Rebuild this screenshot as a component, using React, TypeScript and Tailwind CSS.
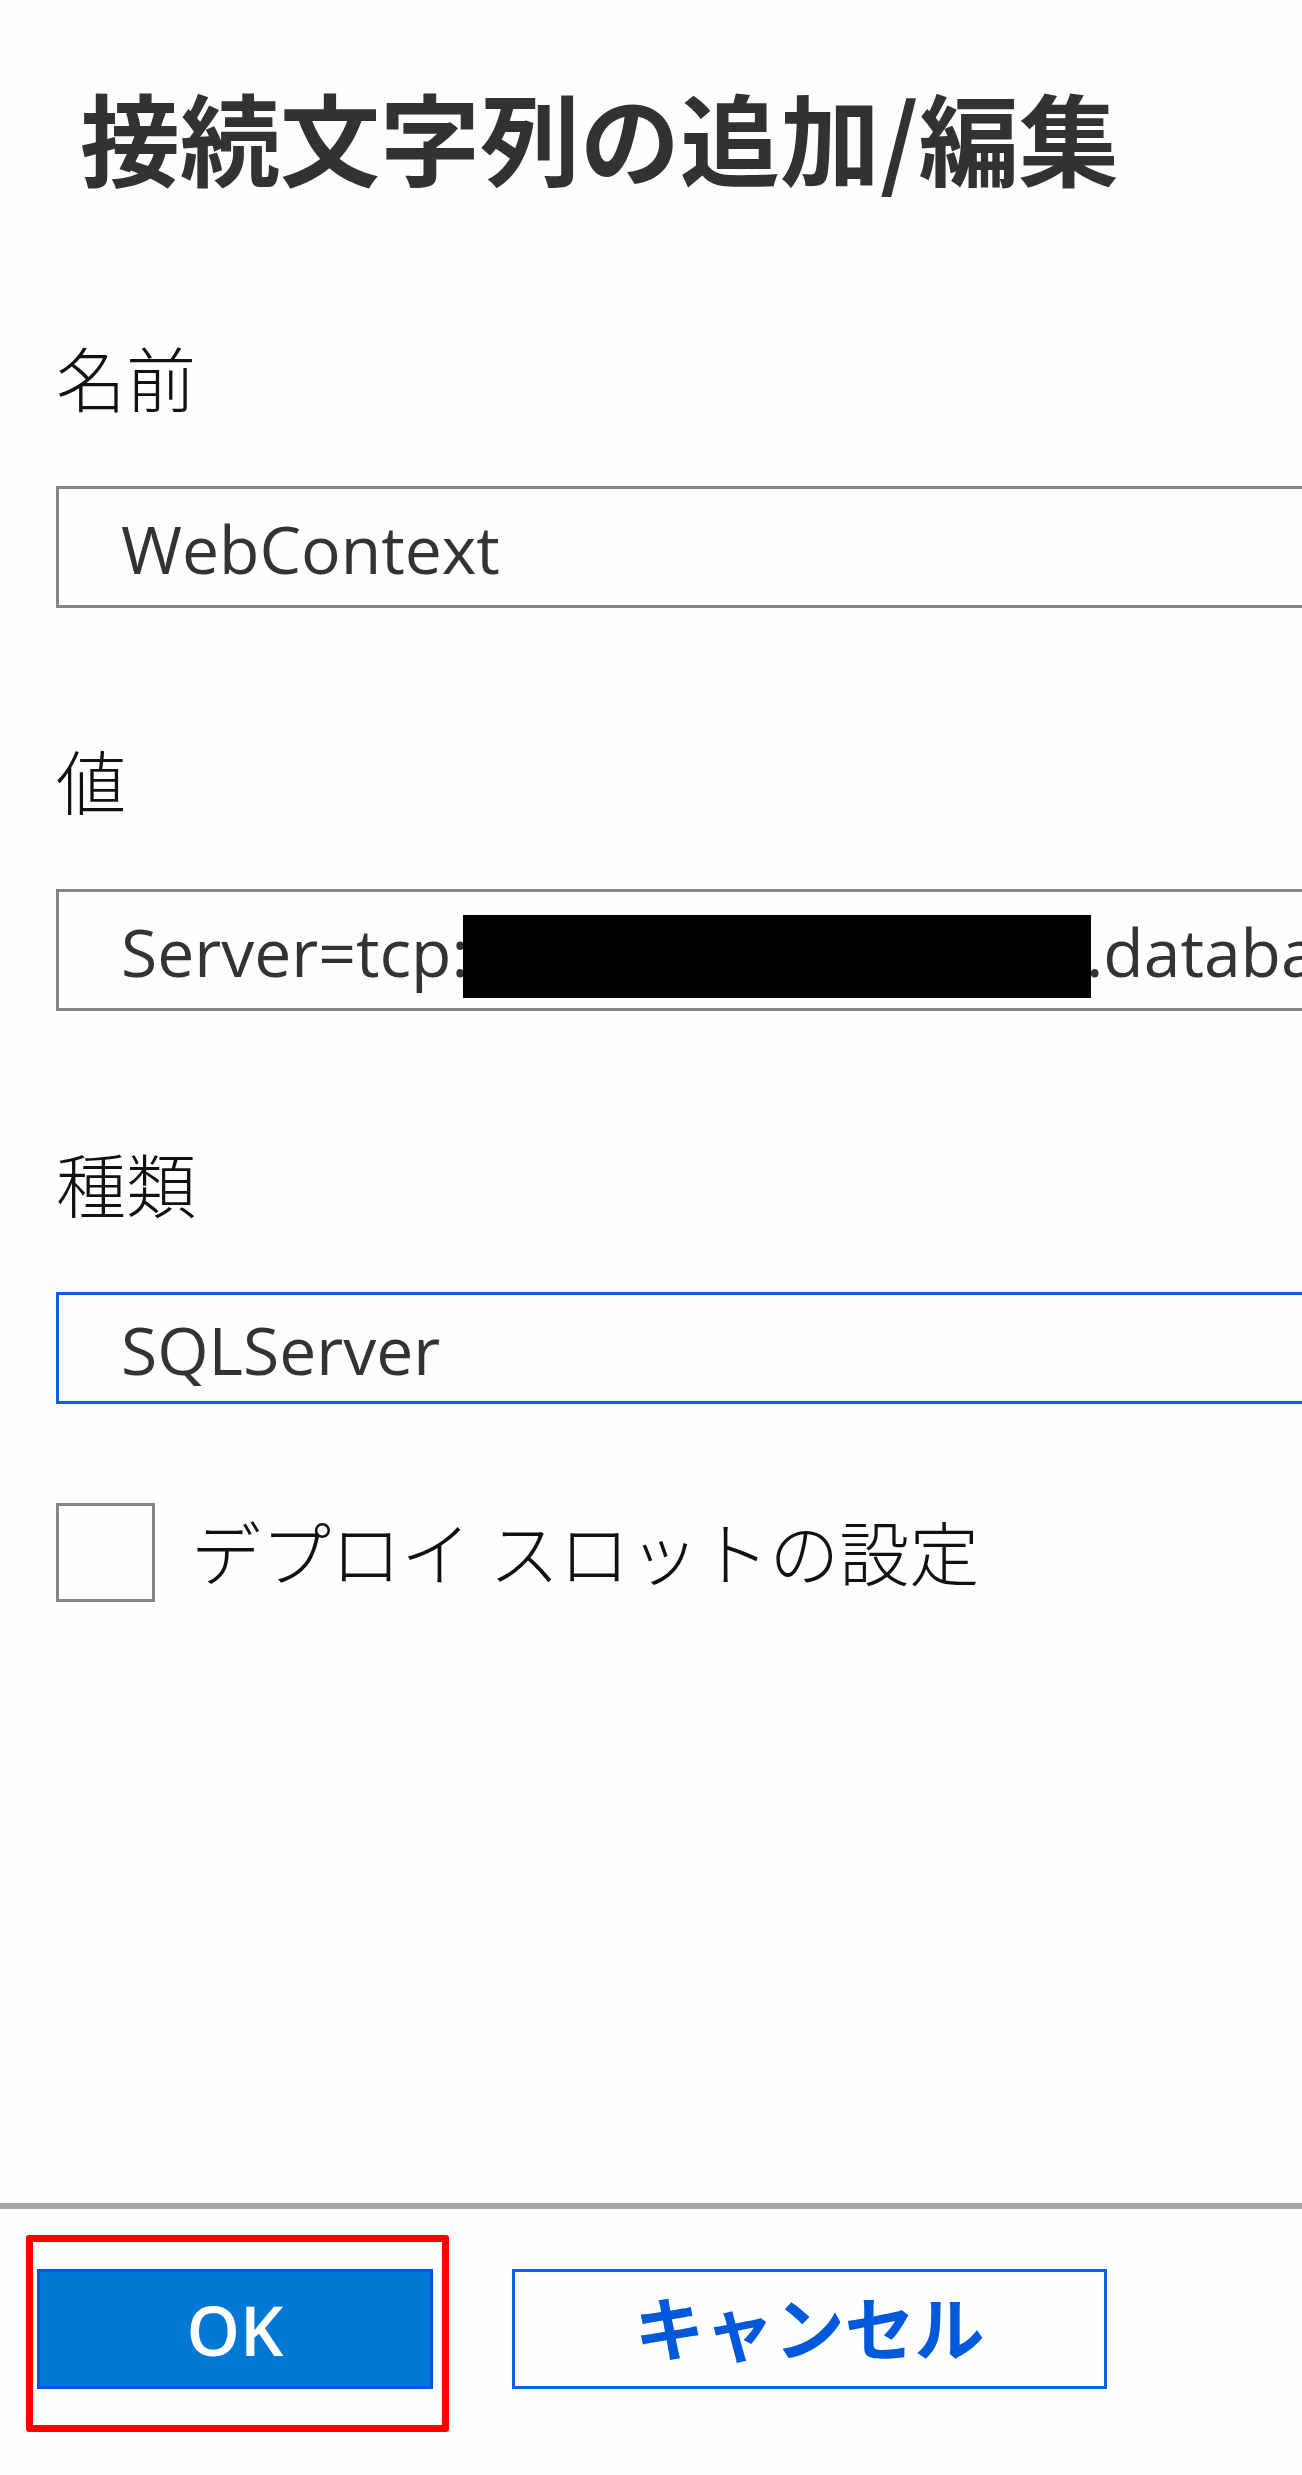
import { useState } from "react";
import type { ReactNode } from "react";

const control =
  "block w-full rounded-none border-[3px] border-r-0 bg-transparent pt-[2px] pl-[62px] text-[66px] font-normal text-[#333333] outline-none";

function Field({ id, label, children }: { id: string; label: string; children: ReactNode }) {
  return (
    <div className="flex flex-col gap-[70px]">
      <label htmlFor={id} className="text-[70px] leading-[72px] font-light">
        {label}
      </label>
      {children}
    </div>
  );
}

export default function App() {
  const [name, setName] = useState("WebContext");
  const [value, setValue] = useState(
    "Server=tcp:" + "\u00a0".repeat(36) + ".database.windows.net",
  );
  const [slot, setSlot] = useState(false);

  return (
    <div className="flex min-h-screen flex-col overflow-hidden bg-[#fefefe] font-['Open_Sans','Noto_Sans_CJK_JP',sans-serif] text-[#111111]">
      <h1 className="pt-[76px] pl-[80px] font-['Noto_Sans_CJK_JP',sans-serif] text-[100px] leading-[120px] font-bold text-[#323232]">
        接続文字列の追加/編集
      </h1>

      <form className="mt-[148px] flex flex-col gap-[139px] pl-[56px]">
        <Field id="name" label="名前">
          <input
            id="name"
            type="text"
            value={name}
            onChange={(e) => setName(e.target.value)}
            className={`${control} h-[122px] border-[#858585]`}
          />
        </Field>
        <Field id="value" label="値">
          <div className="relative">
            <input
              id="value"
              type="text"
              value={value}
              onChange={(e) => setValue(e.target.value)}
              className={`${control} h-[122px] border-[#858585]`}
            />
            <span className="absolute top-[26px] left-[407px] h-[83px] w-[628px] bg-black" />
          </div>
        </Field>
        <div className="flex flex-col gap-[99px]">
          <Field id="type" label="種類">
            <select
              id="type"
              defaultValue="SQLServer"
              className={`${control} h-[112px] appearance-none border-[#0a62e0]`}
            >
              <option>SQLServer</option>
            </select>
          </Field>
          <label className="flex items-start gap-[36px] text-[70px] leading-[102px] font-light whitespace-nowrap">
            <input
              type="checkbox"
              checked={slot}
              onChange={(e) => setSlot(e.target.checked)}
              className="size-[99px] shrink-0 appearance-none border-[3px] border-[#858585] checked:bg-[#0078d4]"
            />
            デプロイ スロットの設定
          </label>
        </div>
      </form>

      <footer className="mt-auto flex items-start gap-[63px] border-t-[6px] border-[#a8a8a8] pt-[26px] pb-[43px] pl-[26px]">
        <div className="rounded-[3px] border-[7px] border-[#ff0000] pt-[27px] pr-[9px] pb-[36px] pl-[4px]">
          <button
            type="button"
            className="block h-[120px] w-[396px] border-[3px] border-[#0058db] bg-[#0078d4] pt-[2px] text-[68px] font-semibold text-white"
          >
            OK
          </button>
        </div>
        <button
          type="button"
          className="mt-[34px] h-[120px] w-[595px] border-[3px] border-[#0a62e0] text-[70px] leading-[70px] font-bold text-[#0058db]"
        >
          キャンセル
        </button>
      </footer>
    </div>
  );
}
